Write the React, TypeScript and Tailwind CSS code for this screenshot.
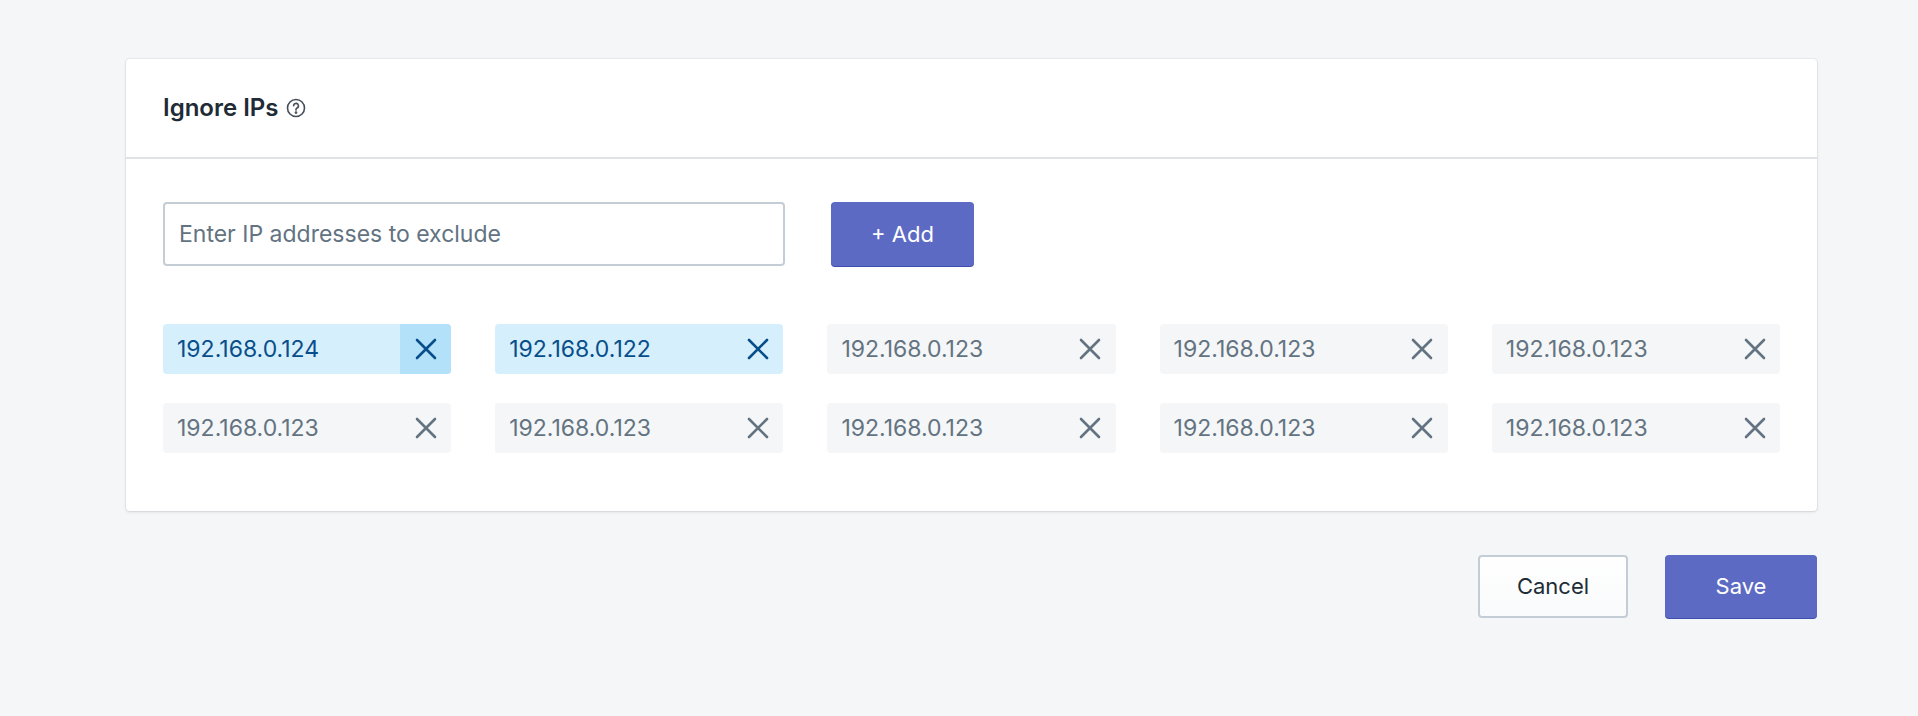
import React from "react";

const ips = [
  { ip: "192.168.0.124", state: "hover" },
  { ip: "192.168.0.122", state: "active" },
  { ip: "192.168.0.123", state: "" },
  { ip: "192.168.0.123", state: "" },
  { ip: "192.168.0.123", state: "" },
  { ip: "192.168.0.123", state: "" },
  { ip: "192.168.0.123", state: "" },
  { ip: "192.168.0.123", state: "" },
  { ip: "192.168.0.123", state: "" },
  { ip: "192.168.0.123", state: "" },
];

const XIcon = ({ color }: { color: string }) => (
  <svg width="24" height="24" viewBox="0 0 24 24" fill="none" stroke={color} strokeWidth="2.6" strokeLinecap="round">
    <path d="M3 3l18 18M21 3L3 21" />
  </svg>
);

const Chip = ({ ip, state }: { ip: string; state: string }) => {
  const blue = state !== "";
  return (
    <div
      className={`flex h-[50px] items-center justify-between rounded-[4px] overflow-hidden ${
        blue ? "bg-[#d6effc] text-[#084e8a]" : "bg-[#f4f6f8] text-[#637381]"
      }`}
    >
      <span className="pl-[14px] text-[23px]">{ip}</span>
      <span
        className={`flex h-full w-[51px] items-center justify-center ${
          state === "hover" ? "bg-[#b4e1fa]" : ""
        }`}
      >
        <XIcon color={blue ? "#084e8a" : "#637381"} />
      </span>
    </div>
  );
};

export default function App() {
  return (
    <div
      className="min-h-[716px] bg-[#f4f6f8] px-[126px] pt-[59px] pr-[101px]"
      style={{ fontFamily: "Inter, 'Noto Sans', sans-serif" }}
    >
      <div className="rounded-[4px] bg-white shadow-[0_0_0_1px_rgba(63,63,68,0.05),0_1px_3px_0_rgba(63,63,68,0.15)]">
        <div className="flex h-[100px] items-center gap-[7px] border-b-2 border-[#dfe3e8] px-[37px]">
          <h2 className="text-[24px] font-semibold text-[#212b36]">Ignore IPs</h2>
          <svg width="20" height="20" viewBox="0 0 20 20" fill="none" stroke="#454f5b" strokeWidth="1.6">
            <circle cx="10" cy="10" r="8.5" />
            <path d="M7.6 7.8a2.4 2.4 0 1 1 3.4 2.2c-.6.3-1 .8-1 1.5v.6" strokeLinecap="round" />
            <circle cx="10" cy="14.6" r="0.6" fill="#454f5b" />
          </svg>
        </div>
        <div className="px-[37px] pt-[43px] pb-[58px]">
          <div className="flex gap-[46px]">
            <input
              className="h-[64px] w-[622px] rounded-[4px] border-2 border-[#c4cdd5] px-[14px] text-[23px] text-[#212b36] placeholder:text-[#637381] outline-none"
              placeholder="Enter IP addresses to exclude"
            />
            <button className="h-[64px] w-[143px] rounded-[4px] bg-[#5c6ac4] text-[22px] text-white shadow-[0_1px_0_0_#3f4eae]">
              + Add
            </button>
          </div>
          <div className="mt-[58px] grid grid-cols-5 gap-x-[44px] gap-y-[29px]">
            {ips.map((c, i) => (
              <Chip key={i} ip={c.ip} state={c.state} />
            ))}
          </div>
        </div>
      </div>
      <div className="mt-[44px] flex justify-end gap-[37px]">
        <button className="h-[63px] w-[150px] rounded-[4px] border-2 border-[#c4cdd5] bg-gradient-to-b from-white to-[#f9fafb] text-[22px] text-[#212b36]">
          Cancel
        </button>
        <button className="h-[63px] w-[152px] rounded-[4px] bg-[#5c6ac4] text-[22px] text-white shadow-[0_1px_0_0_#3f4eae]">
          Save
        </button>
      </div>
    </div>
  );
}
